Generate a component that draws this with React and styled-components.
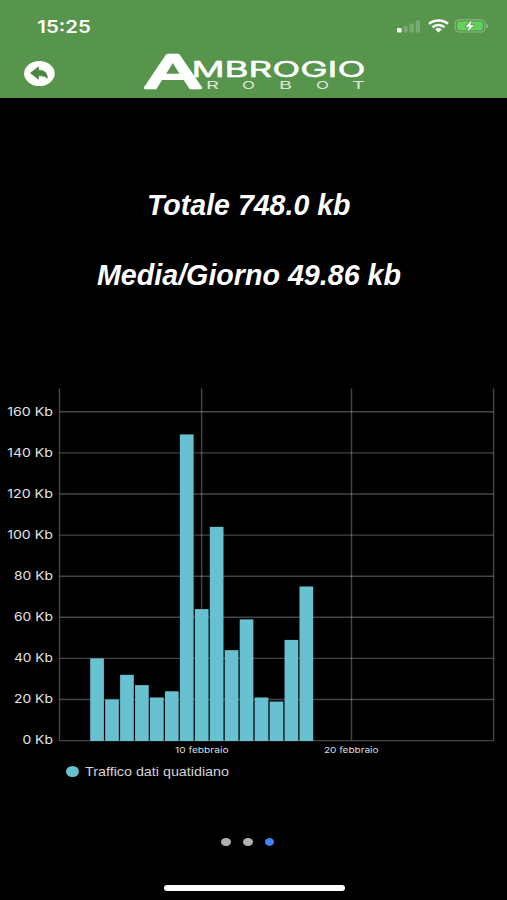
import React from "react";
import styled, { createGlobalStyle } from "styled-components";

const GlobalStyle = createGlobalStyle`
  * { box-sizing: border-box; }
  html, body { margin: 0; background: #000; }
`;

const Screen = styled.main`
  display: flex;
  flex-direction: column;
  width: 507px;
  height: 900px;
  overflow: hidden;
  background: #000;
  color: #fff;
  font-family: "Liberation Sans", Arial, sans-serif;
`;

const Header = styled.header`
  display: flex;
  flex-direction: column;
  height: 98px;
  flex: none;
  background: #57954d;
`;

const StatusBar = styled.div`
  display: flex;
  justify-content: space-between;
  height: 50px;
  padding: 16px 18px 0 37px;
`;

const Drawing = styled.svg`
  display: block;
  flex: none;
  overflow: visible;
`;

const StatusIcons = styled.div`
  display: flex;
  align-items: flex-start;
  gap: 6.4px;
  padding-top: 3px;
`;

const NavBar = styled.nav`
  display: flex;
  align-items: flex-start;
  padding-left: 24px;
`;

const BackButton = styled.button`
  width: 31px;
  height: 25px;
  margin: 11px 89px 0 0;
  padding: 0;
  border: 0;
  background: none;
`;

const Totals = styled.section`
  display: flex;
  flex-direction: column;
  align-items: flex-start;
  height: 290px;
  flex: none;
  padding-top: 90px;
  gap: 38px;
`;

const TotalRow = styled.div`
  height: 33px;
  padding-left: ${(p) => p.$indent}px;
`;

const ChartPanel = styled.section`
  height: 374px;
  flex: none;
`;

const Legend = styled.div`
  display: flex;
  align-items: center;
  gap: 6px;
  height: 20px;
  padding-left: 66px;
`;

const LegendDot = styled.span`
  width: 13px;
  height: 11px;
  margin-top: -2px;
  border-radius: 50%;
  background: #67c1d0;
`;

const Pager = styled.div`
  display: flex;
  gap: 12px;
  margin: 56px 0 0 221.2px;
`;

const PageDot = styled.span`
  width: 9.7px;
  height: 8.4px;
  border-radius: 50%;
  background: ${(p) => (p.$active ? "#4285f4" : "#b0b0b0")};
`;

const HomeIndicator = styled.div`
  width: 181px;
  height: 6px;
  margin: 39px 0 0 163.5px;
  border-radius: 3px;
  background: #fff;
`;

const SANS = '"Liberation Sans", Arial, sans-serif';
const WIDE = 'Inter, "Liberation Sans", sans-serif';

function FitText({ x = 0, y, width, size, children, ...rest }) {
  return (
    <text
      x={x}
      y={y}
      textLength={width}
      lengthAdjust="spacingAndGlyphs"
      fontSize={size}
      fill="#fff"
      {...rest}
    >
      {children}
    </text>
  );
}

function SignalIcon() {
  return (
    <Drawing width="24" height="14" viewBox="0 0 24 14">
      <rect x="0" y="9" width="4.6" height="4.5" rx="1.2" fill="#fff" />
      <g fill="#fff" opacity=".2">
        <rect x="6.5" y="7" width="4.2" height="6.5" rx="1" />
        <rect x="12.5" y="4.5" width="4.2" height="9" rx="1" />
        <rect x="18.8" y="1.6" width="4.2" height="11.9" rx="1" />
      </g>
    </Drawing>
  );
}

function WifiIcon() {
  return (
    <Drawing width="21" height="14" viewBox="0 0 21 14">
      <g fill="none" stroke="#fff" strokeWidth="2.5">
        <path d="M1 4.8C6.2.3 14.8.3 20 4.8" />
        <path d="M4.4 8.3C7.9 5.3 13.1 5.3 16.6 8.3" />
      </g>
      <path d="M7.1 10.3Q10.5 7.8 13.9 10.3L10.5 13.4Z" fill="#fff" />
    </Drawing>
  );
}

function BatteryIcon() {
  return (
    <Drawing width="34" height="14" viewBox="0 0 34 14">
      <rect x=".2" y=".8" width="29.6" height="12.2" rx="3.6" fill="none" stroke="#93bd8c" strokeWidth="1" />
      <path d="M31.2 4.7Q33.3 5.2 33.3 6.9T31.2 9.2Z" fill="#8bb785" />
      <rect x="2.2" y="2.5" width="25.6" height="8.8" rx="2" fill="#60d15c" />
      <path
        d="M16.6 1.2 10.6 7.7H14.1L12.6 12.8 19 6.2H15.5Z"
        fill="#fff"
        stroke="#57954d"
        strokeWidth="1.3"
        paintOrder="stroke"
      />
    </Drawing>
  );
}

function BackIcon() {
  return (
    <Drawing width="31" height="25" viewBox="0 0 31 25">
      <ellipse cx="15.4" cy="12.6" rx="15.3" ry="12.5" fill="#fff" />
      <path
        d="M6.5 12 14.4 5.9V9.2C20.5 9.2 23.5 12 23.2 17.2 20.8 14.9 18.2 14.6 14.4 14.8V18.2Z"
        fill="#4b8743"
        stroke="#4b8743"
        strokeWidth=".8"
        strokeLinejoin="round"
      />
    </Drawing>
  );
}

function Logo() {
  return (
    <Drawing width="222" height="44" viewBox="144 50 222 44">
      <FitText
        x={144}
        y={87.8}
        width={58}
        size={45.5}
        fontFamily={WIDE}
        fontWeight="400"
        stroke="#fff"
        strokeWidth="2.6"
        strokeLinejoin="round"
      >
        A
      </FitText>
      <FitText
        x={191.5}
        y={76.7}
        width={174}
        size={21.5}
        fontFamily={WIDE}
        fontWeight="400"
        stroke="#fff"
        strokeWidth=".5"
        strokeLinejoin="round"
      >
        MBROGIO
      </FitText>
      {[
        ["R", 206],
        ["O", 242],
        ["B", 279],
        ["O", 316],
        ["T", 352],
      ].map(([letter, x]) => (
        <FitText key={x} x={x} y={89} width={13} size={11} fontFamily={WIDE} fillOpacity=".8">{letter}</FitText>
      ))}
    </Drawing>
  );
}

const DAILY = [40, 20, 32, 27, 21, 24, 149, 64, 104, 44, 59, 21, 19, 49, 75];
const TICKS = [0, 20, 40, 60, 80, 100, 120, 140, 160];
const LABEL_X = [22.5, 14, 14, 14, 14, 7.2, 7.2, 7.2, 7.2];
const BASE = 352.6;
const UNIT = 2.055;

function TrafficChart() {
  return (
    <Drawing width="507" height="374" viewBox="0 0 507 374" fontFamily={SANS}>
      <g stroke="#fff" strokeOpacity=".27" strokeWidth="1.4">
        {TICKS.map((t) => (
          <line key={t} x1="59.5" x2="493.7" y1={BASE - t * UNIT} y2={BASE - t * UNIT} />
        ))}
        {[59.5, 201.6, 351.5, 493.6].map((x) => (
          <line key={x} x1={x} x2={x} y1="0.5" y2={BASE} />
        ))}
      </g>
      {DAILY.map((v, i) => (
        <rect
          key={i}
          x={90.2 + i * 14.95}
          y={BASE - v * UNIT}
          width="13.7"
          height={v * UNIT + 0.4}
          fill="#67c1d0"
        />
      ))}
      {TICKS.map((t, i) => (
        <FitText
          key={t}
          x={LABEL_X[i]}
          y={BASE - t * UNIT + 3.8}
          width={52.9 - LABEL_X[i]}
          size={11.7}
          fill="#e4e4e4"
          fontFamily={WIDE}
        >
          {`${t} Kb`}
        </FitText>
      ))}
      <FitText x={175} y={365} width={53.5} size={8} fill="#ddd" fontFamily={WIDE}>10 febbraio</FitText>
      <FitText x={324} y={365} width={54.5} size={8} fill="#ddd" fontFamily={WIDE}>20 febbraio</FitText>
    </Drawing>
  );
}

export default function App() {
  return (
    <>
      <GlobalStyle />
      <Screen>
        <Header>
          <StatusBar>
            <Drawing width="56" height="20" viewBox="0 0 56 20">
              <FitText x={0.3} y={16.5} width={53.5} size={17.2} fontFamily={WIDE} fontWeight="600">15:25</FitText>
            </Drawing>
            <StatusIcons>
              <SignalIcon />
              <WifiIcon />
              <BatteryIcon />
            </StatusIcons>
          </StatusBar>
          <NavBar>
            <BackButton aria-label="Indietro">
              <BackIcon />
            </BackButton>
            <Logo />
          </NavBar>
        </Header>
        <Totals>
          <TotalRow $indent={147}>
            <Drawing width="205" height="33" viewBox="0 0 205 33">
              <FitText x={0} y={26.5} width={203.5} size={28.6} fontWeight="700" fontStyle="italic">Totale 748.0 kb</FitText>
            </Drawing>
          </TotalRow>
          <TotalRow $indent={97}>
            <Drawing width="305" height="33" viewBox="0 0 305 33">
              <FitText x={0} y={26.3} width={304} size={28.6} fontWeight="700" fontStyle="italic">Media/Giorno 49.86 kb</FitText>
            </Drawing>
          </TotalRow>
        </Totals>
        <ChartPanel>
          <TrafficChart />
        </ChartPanel>
        <Legend>
          <LegendDot />
          <Drawing width="146" height="20" viewBox="0 0 146 20">
            <FitText x={0} y={14} width={144} size={12.8} fill="#d4d4d4">Traffico dati quatidiano</FitText>
          </Drawing>
        </Legend>
        <Pager>
          <PageDot />
          <PageDot />
          <PageDot $active />
        </Pager>
        <HomeIndicator />
      </Screen>
    </>
  );
}
